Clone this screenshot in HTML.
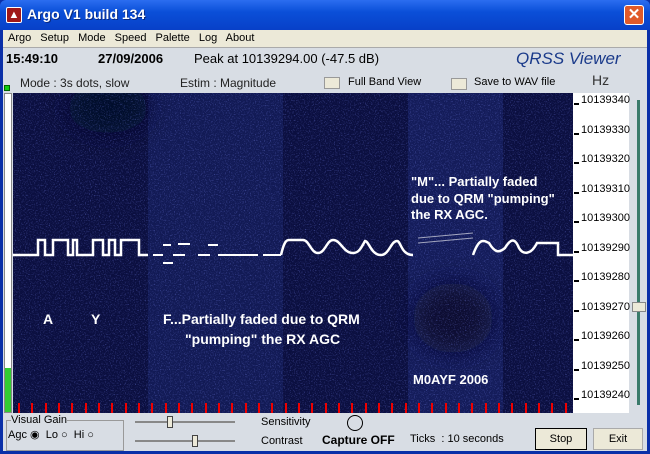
<!DOCTYPE html><html><head><style>
*{margin:0;padding:0;box-sizing:border-box}
body{width:650px;height:454px;overflow:hidden;background:#0a2fa8;font-family:"Liberation Sans",sans-serif;position:relative}
.a{position:absolute}
.t{font-size:12px;color:#000;white-space:nowrap}
.sc div{height:29.5px;position:relative;padding-left:8px;line-height:15px}
.sc div::before{content:"";position:absolute;left:1px;top:10px;width:5px;height:2px;background:#000}
</style></head><body>
<div class="a" style="left:0;top:0;width:650px;height:30px;background:linear-gradient(#2b6df0,#0a4fd8 40%,#0840c8);border-radius:6px 6px 0 0"></div>
<div class="a" style="left:6px;top:7px;width:16px;height:16px;background:#a01818;border:1px solid #fff;border-radius:2px;color:#fff;font-size:11px;text-align:center;line-height:14px">▲</div>
<div class="a" style="left:27px;top:6px;color:#fff;font-weight:bold;font-size:14px;text-shadow:1px 1px #0a2a80">Argo V1 build 134</div>
<div class="a" style="left:624px;top:5px;width:20px;height:20px;background:#e05a2a;border:1px solid #fff;border-radius:3px;color:#fff;font-size:15px;text-align:center;line-height:18px;font-weight:bold">✕</div>
<div class="a" style="left:3px;top:30px;width:644px;height:421px;background:#d8dde4"></div>
<div class="a" style="left:3px;top:30px;width:644px;height:17px;background:#ece9d8"></div>
<div class="a t" style="left:8px;top:32px;font-size:11px;word-spacing:6px">Argo Setup Mode Speed Palette Log About</div>
<div class="a" style="left:3px;top:47px;width:644px;height:1px;background:#aaa"></div>
<div class="a t" style="left:6px;top:51px;font-weight:bold;font-size:13px">15:49:10</div>
<div class="a t" style="left:98px;top:51px;font-weight:bold;font-size:13px">27/09/2006</div>
<div class="a t" style="left:194px;top:51px;font-size:13px">Peak at 10139294.00 (-47.5 dB)</div>
<div class="a t" style="left:516px;top:49px;font-size:17px;font-style:italic;color:#1a3a8a">QRSS Viewer</div>
<div class="a t" style="left:20px;top:76px;font-size:12px;color:#222">Mode : 3s dots, slow</div>
<div class="a t" style="left:180px;top:76px;font-size:12px;color:#222">Estim : Magnitude</div>
<div class="a" style="left:324px;top:77px;width:16px;height:12px;background:#ece9d8;border:1px solid #999"></div>
<div class="a t" style="left:348px;top:76px;font-size:11px">Full Band View</div>
<div class="a" style="left:451px;top:78px;width:16px;height:12px;background:#ece9d8;border:1px solid #999"></div>
<div class="a t" style="left:474px;top:76px;font-size:11px">Save to WAV file</div>
<div class="a t" style="left:592px;top:72px;font-size:14px;color:#333">Hz</div>
<div class="a" style="left:4px;top:85px;width:6px;height:6px;background:#1c1;border:1px solid #060"></div>
<div class="a" style="left:4px;top:93px;width:8px;height:320px;background:#fff;border:1px solid #888"></div>
<div class="a" style="left:5px;top:368px;width:6px;height:44px;background:#3c3"></div>
<div class="a" style="left:13px;top:93px;width:560px;height:320px;background:#0b0f40"></div>
<svg class="a" style="left:13px;top:93px" width="560" height="320">
<defs><filter id="n" x="0" y="0" width="100%" height="100%"><feTurbulence type="fractalNoise" baseFrequency=".8" numOctaves="2" seed="3"/><feColorMatrix values="0 0 0 0 .2  0 0 0 0 .25  0 0 0 0 .9  0 0 0 3 -1.6"/></filter>
<filter id="b"><feGaussianBlur stdDeviation="12"/></filter></defs>
<rect x="135" y="0" width="135" height="320" fill="#121a55"/>
<rect x="395" y="0" width="95" height="320" fill="#141c5a"/>
<g filter="url(#b)"><ellipse cx="95" cy="15" rx="40" ry="25" fill="#060a2a"/>
<ellipse cx="440" cy="225" rx="40" ry="35" fill="#070b30"/></g>
<rect width="560" height="320" filter="url(#n)" opacity=".45"/>
<g fill="none" stroke="#fff" stroke-width="2.5">
<polyline points="0,162 25,162 25,147 32,147 32,162 40,162 40,147 55,147 55,162 60,162 60,147 64,147 64,162 80,162 80,147 90,147 90,162 96,162 96,147 102,147 102,162 108,162 108,147 126,147 126,162 135,162"/>
<path d="M140,162h10M160,162h12M185,162h12M205,162h40M250,162h18M150,152h8M165,151h12M195,152h10M150,170h10" stroke-width="2"/>
<path d="M268,162 C272,145 274,147 280,147 L290,147 C296,147 298,160 305,160 C312,160 314,147 320,147 C328,147 330,160 340,160 C346,160 348,155 352,148 C356,148 358,162 368,162 C376,162 378,148 384,148 C388,148 388,162 400,162"/>
<path d="M460,162 C466,145 470,147 476,150 C482,160 486,160 492,155 C498,145 502,145 506,155 C510,162 518,162 524,150 L545,150 L545,162 L560,162"/>
</g>
<g stroke="#fff" stroke-width="1" opacity=".6"><path d="M405,145 L460,140 M405,150 L460,145"/></g>
<g stroke="#e00" stroke-width="2">
<path d="M6,310v10M19,310v10M33,310v10M46,310v10M59,310v10M73,310v10M86,310v10M99,310v10M113,310v10M126,310v10M139,310v10M153,310v10M166,310v10M179,310v10M193,310v10M206,310v10M219,310v10M233,310v10M246,310v10M259,310v10M273,310v10M286,310v10M299,310v10M313,310v10M326,310v10M339,310v10M353,310v10M366,310v10M379,310v10M393,310v10M406,310v10M419,310v10M433,310v10M446,310v10M459,310v10M473,310v10M486,310v10M499,310v10M513,310v10M526,310v10M539,310v10M553,310v10"/></g>
<g fill="#fff" font-family="Liberation Sans" font-weight="bold">
<text x="30" y="231" font-size="14">A</text><text x="78" y="231" font-size="14">Y</text>
<text x="150" y="231" font-size="14">F...Partially faded due to QRM</text>
<text x="172" y="251" font-size="14">"pumping" the RX AGC</text>
<text x="398" y="93" font-size="13">"M"... Partially faded</text>
<text x="398" y="110" font-size="13">due to QRM "pumping"</text>
<text x="398" y="126" font-size="13">the RX AGC.</text>
<text x="400" y="291" font-size="13">M0AYF 2006</text>
</g></svg>
<div class="a" style="left:573px;top:93px;width:56px;height:320px;background:#fff"></div>
<div class="a sc" style="left:573px;top:93px;font-size:11px;color:#000">
<div>10139340</div><div>10139330</div><div>10139320</div><div>10139310</div><div>10139300</div><div>10139290</div><div>10139280</div><div>10139270</div><div>10139260</div><div>10139250</div><div>10139240</div></div>
<div class="a" style="left:637px;top:100px;width:3px;height:305px;background:#3a7a6a"></div>
<div class="a" style="left:632px;top:302px;width:14px;height:10px;background:#ece9d8;border:1px solid #888"></div>
<div class="a" style="left:6px;top:420px;width:118px;height:31px;border:1px solid #999"></div>
<div class="a t" style="left:11px;top:414px;font-size:11px;background:#d8dde4">Visual Gain</div>
<div class="a t" style="left:8px;top:428px;font-size:11px">Agc ◉ &nbsp;Lo ○ &nbsp;Hi ○</div>
<div class="a" style="left:135px;top:421px;width:100px;height:2px;background:#888"></div>
<div class="a" style="left:135px;top:440px;width:100px;height:2px;background:#888"></div>
<div class="a" style="left:167px;top:416px;width:6px;height:12px;background:#ece9d8;border:1px solid #444"></div>
<div class="a" style="left:192px;top:435px;width:6px;height:12px;background:#ece9d8;border:1px solid #444"></div>
<div class="a t" style="left:261px;top:416px;font-size:11px">Sensitivity</div>
<div class="a t" style="left:261px;top:435px;font-size:11px">Contrast</div>
<div class="a" style="left:347px;top:415px;width:16px;height:16px;border:1px solid #000;border-radius:50%"></div>
<div class="a t" style="left:322px;top:433px;font-size:12px;font-weight:bold">Capture OFF</div>
<div class="a t" style="left:410px;top:433px;font-size:11px">Ticks &nbsp;: 10 seconds</div>
<div class="a t" style="left:535px;top:428px;width:52px;height:22px;border:1px solid #000;background:#ece9d8;text-align:center;line-height:20px;font-size:11px">Stop</div>
<div class="a t" style="left:593px;top:428px;width:50px;height:22px;border:1px solid #aaa;background:#ece9d8;text-align:center;line-height:20px;font-size:11px">Exit</div>
</body></html>
